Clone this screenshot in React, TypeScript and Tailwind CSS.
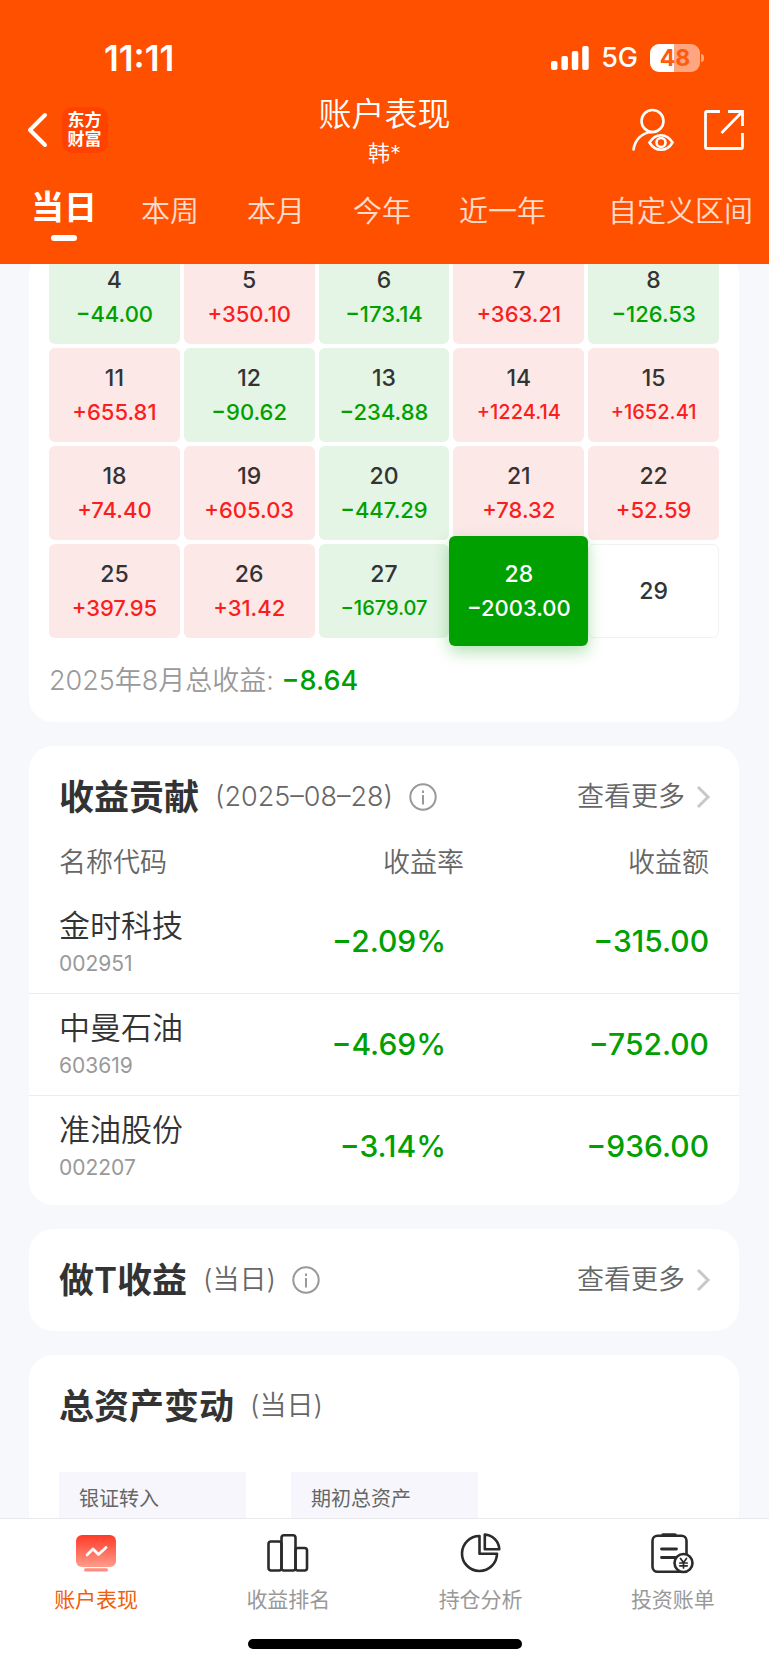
import type { ReactNode } from 'react'

type Day = { day: number; value?: string; selected?: boolean }

const days: Day[] = [
    { day: 4, value: '−44.00' },
    { day: 5, value: '+350.10' },
    { day: 6, value: '−173.14' },
    { day: 7, value: '+363.21' },
    { day: 8, value: '−126.53' },
    { day: 11, value: '+655.81' },
    { day: 12, value: '−90.62' },
    { day: 13, value: '−234.88' },
    { day: 14, value: '+1224.14' },
    { day: 15, value: '+1652.41' },
    { day: 18, value: '+74.40' },
    { day: 19, value: '+605.03' },
    { day: 20, value: '−447.29' },
    { day: 21, value: '+78.32' },
    { day: 22, value: '+52.59' },
    { day: 25, value: '+397.95' },
    { day: 26, value: '+31.42' },
    { day: 27, value: '−1679.07' },
    { day: 28, value: '−2003.00', selected: true },
    { day: 29 },
]

const stocks = [
    { name: '金时科技', code: '002951', rate: '−2.09%', amount: '−315.00' },
    { name: '中曼石油', code: '603619', rate: '−4.69%', amount: '−752.00' },
    { name: '准油股份', code: '002207', rate: '−3.14%', amount: '−936.00' },
]

const tabs = ['当日', '本周', '本月', '今年', '近一年']

function StatusBar() {
    return (
        <div className="flex h-[34px] items-center justify-between pl-[104px] pr-[65px]">
            <span className="text-[35px] font-semibold">11:11</span>
            <div className="flex items-center gap-3">
                <svg width="38" height="24" viewBox="0 0 38 24" fill="currentColor">
                    <rect x="0" y="15" width="6.5" height="9" rx="2" />
                    <rect x="10.4" y="10" width="6.5" height="14" rx="2" />
                    <rect x="20.8" y="5" width="6.5" height="19" rx="2" />
                    <rect x="31.2" y="0" width="6.5" height="24" rx="2" />
                </svg>
                <span className="text-[27px] font-medium">5G</span>
                <div className="flex items-center gap-px">
                    <span className="flex h-7 w-[50px] items-center justify-center rounded-[9px] bg-linear-to-r from-white from-48% to-[#ffa680] to-48% text-[23px] font-bold text-[#ff5b10]">
                        48
                    </span>
                    <span className="h-2 w-[3px] rounded-r-full bg-[#ffa680]" />
                </div>
            </div>
        </div>
    )
}

function TitleBar() {
    return (
        <div className="mt-[15px] grid h-20 grid-cols-3 items-center px-6">
            <div className="flex items-center gap-3">
                <button type="button" aria-label="返回">
                    <svg width="26" height="36" viewBox="0 0 26 36" fill="none" stroke="currentColor" strokeWidth="4" strokeLinecap="round" strokeLinejoin="round">
                        <path d="M21 3 6 18l15 15" />
                    </svg>
                </button>
                <div className="flex h-[46px] w-[46px] items-center justify-center rounded-[10px] bg-[#ff4200]">
                    <span className="w-[35px] text-[17px] font-bold leading-[19px]">东方财富</span>
                </div>
            </div>
            <div className="text-center">
                <h1 className="text-[33px] font-[350] leading-[46px]">账户表现</h1>
                <p className="text-[22px] font-[350] leading-8">韩*</p>
            </div>
            <div className="flex items-center justify-end gap-7">
                <button type="button" aria-label="账户查看">
                    <svg width="44" height="44" viewBox="0 0 44 44" fill="none" stroke="currentColor" strokeWidth="2.6" strokeLinecap="round">
                        <circle cx="21.5" cy="13" r="11" />
                        <path d="M2.5 41.500C4 32 11 24 21.500 24" />
                        <path d="M18.500 34.500C21.500 29.500 25.500 27.200 30 27.200s8.500 2.300 11.500 7.300C38.500 39.500 34.500 41.800 30 41.800s-8.500-2.300-11.500-7.300Z" />
                        <circle cx="30" cy="34.500" r="4.500" />
                    </svg>
                </button>
                <button type="button" aria-label="分享">
                    <svg width="42" height="42" viewBox="0 0 42 42" fill="none" stroke="currentColor" strokeWidth="2.8">
                        <path d="M17 2.500H4A1.500 1.500 0 0 0 2.500 4v34A1.500 1.500 0 0 0 4 39.500h34a1.500 1.500 0 0 0 1.500-1.500V24" />
                        <path d="M25 2.500h14.500V17M39.500 2.500 18.500 24" />
                    </svg>
                </button>
            </div>
        </div>
    )
}

function Header() {
    return (
        <header className="shrink-0 bg-[#ff5000] pt-[41px] text-white">
            <StatusBar />
            <TitleBar />
            <nav className="flex h-[94px] items-start pl-[11px] pr-4">
                {tabs.map((tab, i) =>
                    i === 0 ? (
                        <button key={tab} type="button" className="relative h-[84px] px-5 pb-2 text-[33px] font-bold">
                            {tab}
                            <span className="absolute bottom-[13px] left-1/2 h-[6px] w-[26px] -translate-x-1/2 rounded-full bg-white" />
                        </button>
                    ) : (
                        <button key={tab} type="button" className="h-[84px] px-6 text-[29px] font-[350] text-white/80">
                            {tab}
                        </button>
                    ),
                )}
                <button type="button" className="ml-auto h-[84px] text-[29px] font-[350] text-white/80">
                    自定义区间
                </button>
            </nav>
        </header>
    )
}

function DayCell({ day, value, selected }: Day) {
    if (!value) {
        return (
            <button type="button" className="h-[94px] rounded-md border border-[#f2f2f2] text-[23px] font-medium text-[#333]">
                {day}
            </button>
        )
    }
    const up = value.startsWith('+')
    const tone = selected
        ? 'relative z-10 -mx-1 -my-2 h-[110px] bg-[#00a000] text-white shadow-[0_6px_16px_rgba(0,160,0,0.3)]'
        : up
          ? 'h-[94px] bg-[#fde8e8] text-[#fa1e1e]'
          : 'h-[94px] bg-[#e4f4e5] text-[#00a000]'
    const size = value.length > 7 && !selected ? 'text-[20px]' : 'text-[22px]'
    return (
        <button type="button" className={`flex flex-col items-center justify-center rounded-md font-medium leading-[34px] ${tone}`}>
            <span className={selected ? 'text-[23px]' : 'text-[23px] text-[#333]'}>{day}</span>
            <span className={size}>{value}</span>
        </button>
    )
}

function InfoIcon() {
    return (
        <svg className="ml-4" width="28" height="28" viewBox="0 0 28 28" fill="none" stroke="#999" strokeWidth="2">
            <circle cx="14" cy="14" r="12.700" />
            <path d="M14 12v9.500M14 7.500v2.500" />
        </svg>
    )
}

function CardHead({ title, note, info, more }: { title: string; note: string; info?: boolean; more?: boolean }) {
    return (
        <div className="flex h-[102px] items-center pl-[30px] pr-7">
            <h2 className="text-[35px] font-semibold">{title}</h2>
            <span className="ml-4 text-[27px] font-[350] text-[#666]">{note}</span>
            {info && <InfoIcon />}
            {more && (
                <a href="#more" className="ml-auto flex items-center gap-[10px] text-[27px] font-[350] text-[#666]">
                    查看更多
                    <svg width="16" height="24" viewBox="0 0 16 24" fill="none" stroke="#c8c8c8" strokeWidth="3">
                        <path d="m3 2 10 10L3 22" />
                    </svg>
                </a>
            )}
        </div>
    )
}

function Card({ children }: { children: ReactNode }) {
    return <section className="mb-6 ml-[29px] mr-[30px] rounded-3xl bg-white">{children}</section>
}

function StockTable() {
    return (
        <table className="w-full table-fixed">
            <thead>
                <tr className="text-[27px] leading-[30px] text-[#666]">
                    <th className="w-[30%] pb-[13px] pl-[30px] text-left font-[350]">名称代码</th>
                    <th className="pb-[13px] pr-[62px] text-right font-[350]">收益率</th>
                    <th className="w-[30%] pb-[13px] pr-[30px] text-right font-[350]">收益额</th>
                </tr>
            </thead>
            <tbody>
                {stocks.map((s) => (
                    <tr key={s.code} className="h-[102px] border-b border-[#ececec] last:border-0">
                        <td className="pl-[30px]">
                            <div className="text-[31px] font-[350] leading-[44px]">{s.name}</div>
                            <div className="text-[21px] leading-8 text-[#999]">{s.code}</div>
                        </td>
                        <td className="pr-20 text-right text-[30px] font-medium text-[#00a000]">{s.rate}</td>
                        <td className="pr-[30px] text-right text-[30px] font-medium text-[#00a000]">{s.amount}</td>
                    </tr>
                ))}
            </tbody>
        </table>
    )
}

function AccountIcon() {
    return (
        <svg width="42" height="42" viewBox="0 0 42 42" fill="none">
            <defs>
                <linearGradient id="screen" x1="0" y1="0" x2="0" y2="1">
                    <stop offset="0" stopColor="#ff3a26" />
                    <stop offset="1" stopColor="#ff9c8c" />
                </linearGradient>
            </defs>
            <rect x="1" y="3" width="40" height="32" rx="6" fill="url(#screen)" />
            <path d="m12 23 6-6 5.500 5.500L31 15.500" stroke="#fff" strokeWidth="2.800" strokeLinecap="round" strokeLinejoin="round" />
            <rect x="9" y="36.300" width="24" height="3.200" rx="1.600" fill="#ff8d7e" />
        </svg>
    )
}

function RankIcon() {
    return (
        <svg width="42" height="42" viewBox="0 0 42 42" fill="none" stroke="#2b2b2b" strokeWidth="2.600">
            <rect x="1.500" y="9.500" width="13" height="29" rx="2.500" />
            <rect x="14.500" y="3.200" width="14" height="35.300" rx="2.500" />
            <rect x="28.500" y="16" width="11.500" height="22.500" rx="2.500" />
        </svg>
    )
}

function PieIcon() {
    return (
        <svg width="42" height="42" viewBox="0 0 42 42" fill="none" stroke="#2b2b2b" strokeWidth="2.600" strokeLinejoin="round">
            <path d="M19.500 4A17.500 17.500 0 1 0 37 21.800H19.500Z" />
            <path d="M24.800 2.500v14.800h14.500A15.500 15.500 0 0 0 24.800 2.500Z" />
        </svg>
    )
}

function BillIcon() {
    return (
        <svg width="44" height="42" viewBox="2 0 44 42" fill="none" stroke="#2b2b2b" strokeWidth="2.600" strokeLinecap="round">
            <rect x="3.500" y="3.800" width="34" height="36" rx="5" />
            <path d="M14 3h12" strokeWidth="3.600" />
            <path d="M12.500 17h15M12.500 25.500h14" strokeWidth="2.800" />
            <circle cx="34.500" cy="31" r="9" fill="#fff" />
            <path d="m31.500 26.500 3 4 3-4M34.500 30.500v5.500M30.800 31h7.400M30.800 33.800h7.400" strokeWidth="1.700" />
        </svg>
    )
}

function BottomNav() {
    const items = [
        { label: '账户表现', icon: <AccountIcon />, color: 'text-[#f0600c]' },
        { label: '收益排名', icon: <RankIcon />, color: 'text-[#999]' },
        { label: '持仓分析', icon: <PieIcon />, color: 'text-[#999]' },
        { label: '投资账单', icon: <BillIcon />, color: 'text-[#999]' },
    ]
    return (
        <footer className="shrink-0 border-t border-[#e9e9ec] bg-white pb-4">
            <nav className="grid grid-cols-4 pt-[13px]">
                {items.map((item) => (
                    <a key={item.label} href="#nav" className={`flex flex-col items-center gap-[11px] text-[21px] leading-[30px] ${item.color}`}>
                        {item.icon}
                        <span>{item.label}</span>
                    </a>
                ))}
            </nav>
            <div className="mx-auto mt-6 h-[10px] w-[274px] rounded-full bg-black" />
        </footer>
    )
}

export default function App() {
    return (
        <div className="flex h-screen flex-col bg-[#f6f8fb] font-[Inter,'Noto_Sans_CJK_SC',sans-serif] text-[#333]">
            <Header />
            <main className="min-h-0 flex-1 overflow-hidden">
                {/* calendar is scrolled a little under the header */}
                <div className="-mt-[14px]">
                    <Card>
                        <div className="grid grid-cols-5 gap-1 px-5">
                            {days.map((d) => (
                                <DayCell key={d.day} {...d} />
                            ))}
                        </div>
                        <p className="px-5 pb-[21px] pt-[23px] text-[27px] font-[350] leading-10 text-[#999]">
                            2025年8月总收益: <span className="font-medium text-[#00a000]">−8.64</span>
                        </p>
                    </Card>

                    <Card>
                        <CardHead title="收益贡献" note="(2025–08–28)" info more />
                        <StockTable />
                        <div className="h-2" />
                    </Card>

                    <Card>
                        <CardHead title="做T收益" note="(当日)" info more />
                    </Card>

                    <Card>
                        <CardHead title="总资产变动" note="(当日)" />
                        <div className="mt-[15px] flex gap-[45px] px-[30px] text-[20px] text-[#666]">
                            <div className="h-[120px] w-[187px] bg-[#f6f6fc] px-5 pt-3 leading-[30px]">银证转入</div>
                            <div className="h-[120px] w-[187px] bg-[#f6f6fc] px-5 pt-3 leading-[30px]">期初总资产</div>
                        </div>
                    </Card>
                </div>
            </main>
            <BottomNav />
        </div>
    )
}
